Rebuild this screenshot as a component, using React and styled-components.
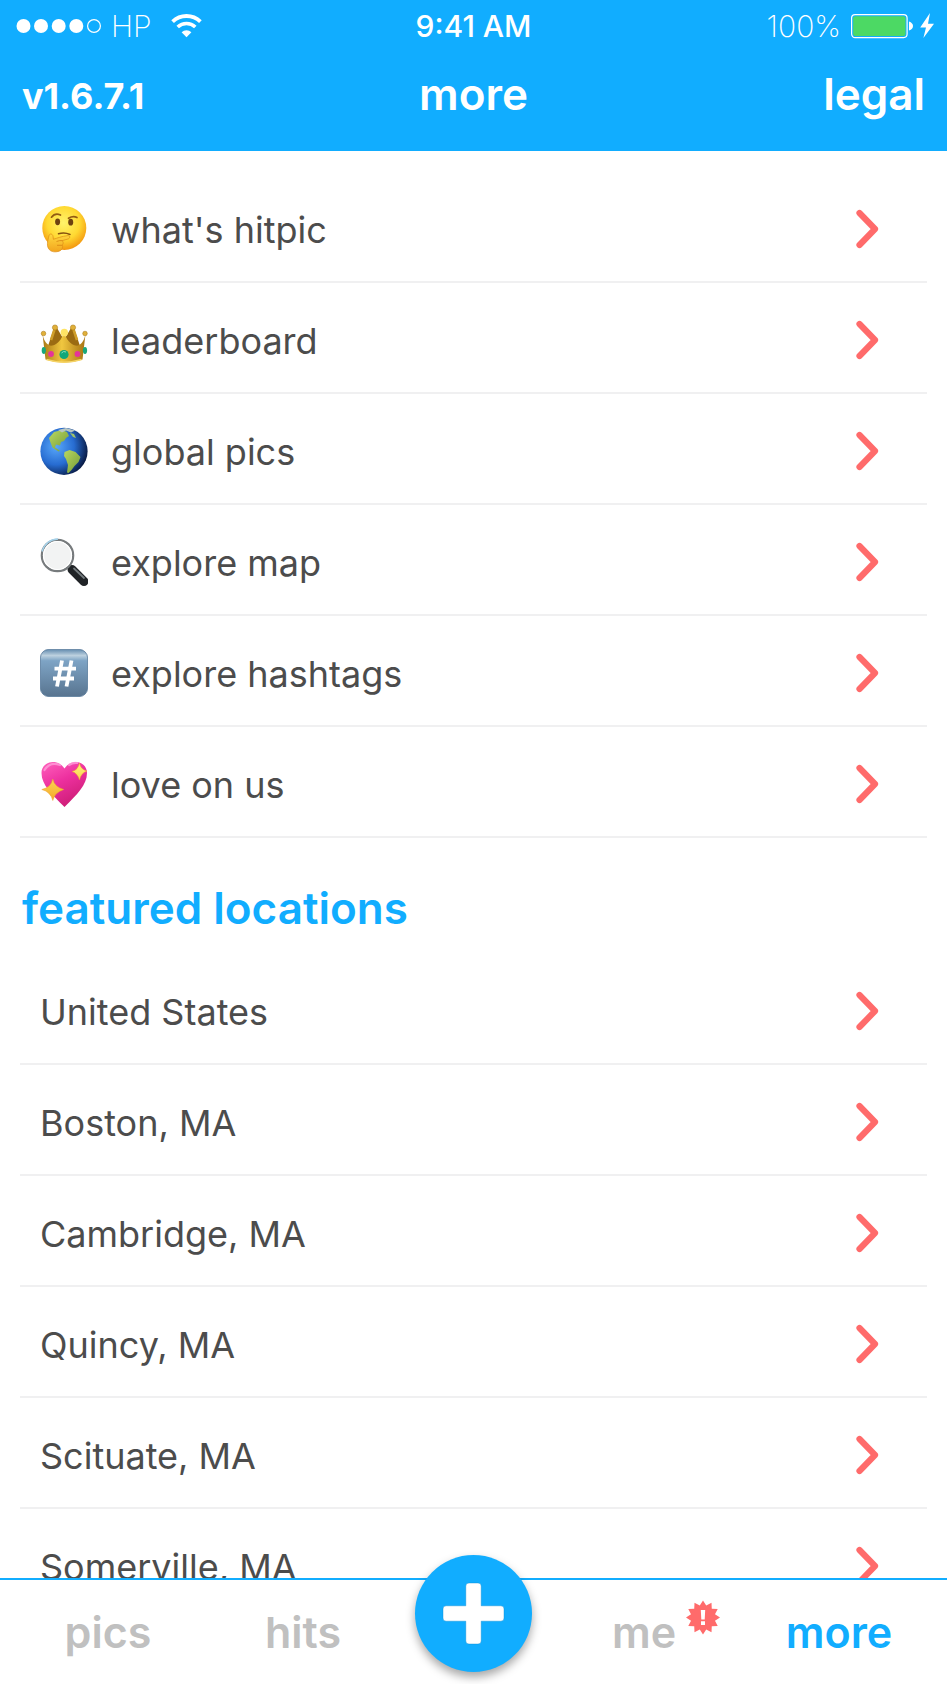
import React from "react";
import styled, { createGlobalStyle } from "styled-components";

const blue = "#11adff";
const coral = "#ff6b6b";

const GlobalStyle = createGlobalStyle`
  * { box-sizing: border-box; }
  body { margin: 0; background: #fff; }
  button, a { font: inherit; color: inherit; text-decoration: none; }
`;

const Screen = styled.div`
  display: flex;
  flex-direction: column;
  height: 100vh;
  overflow: hidden;
  background: #fff;
  color: #4c4c4c;
  font-family: Inter, "Liberation Sans", sans-serif;
`;

const Header = styled.header`
  flex: none;
  background: ${blue};
  color: #fff;
  padding-bottom: 20px;
`;

const StatusBar = styled.div`
  display: grid;
  grid-template-columns: 1fr auto 1fr;
  align-items: center;
  height: 52px;
  padding: 0 13px;
  font-size: 30px;
  line-height: 52px;
  font-weight: 200;
`;

const StatusGroup = styled.div`
  display: flex;
  align-items: center;
  justify-content: ${(p) => (p.$end ? "flex-end" : "flex-start")};
  gap: 9px;
  padding-left: 3px;
`;

const Carrier = styled.span`
  margin-right: 10px;
`;

const Clock = styled.time`
  font-weight: 500;
`;

const Navigation = styled.div`
  display: grid;
  grid-template-columns: 1fr auto 1fr;
  align-items: center;
  height: 79px;
  padding: 4px 22px 0;
  font-size: 44px;
  line-height: 52px;
  font-weight: 600;
`;

const Version = styled.span`
  font-size: 36px;
  font-weight: 700;
  padding-top: 4px;
`;

const Title = styled.h1`
  margin: 0;
  font-size: 44px;
  font-weight: 600;
`;

const HeaderLink = styled.a`
  justify-self: end;
`;

const Content = styled.main`
  flex: 1;
  min-height: 0;
  overflow-y: auto;
  scrollbar-width: none;
  padding: 21px 20px 0;
`;

const List = styled.ul`
  list-style: none;
  margin: 0;
  padding: 0;
`;

const RowLink = styled.a`
  display: flex;
  align-items: center;
  gap: 23px;
  height: 111px;
  padding: 5px 48px 0 20px;
  border-bottom: 2px solid #f0f0f1;
  font-size: 36px;
  line-height: 44px;
`;

const RowLabel = styled.span`
  flex: 1;
  padding-top: 1px;
`;

const SectionTitle = styled.h2`
  margin: 0;
  padding: 44px 0 20px 2px;
  color: ${blue};
  font-size: 44px;
  line-height: 52px;
  font-weight: 600;
`;

const TabBar = styled.nav`
  flex: none;
  position: relative;
  display: grid;
  grid-template-columns: 216fr 174fr 167fr 174fr 216fr;
  justify-items: center;
  height: 106px;
  border-top: 2px solid ${blue};
  background: #fff;
`;

const Tab = styled.a`
  position: relative;
  align-self: center;
  color: ${(p) => (p.$active ? blue : "#c0c0c0")};
  font-size: 43px;
  line-height: 52px;
  font-weight: 600;
`;

const Badge = styled.span`
  position: absolute;
  left: 100%;
  top: -6px;
  display: flex;
  margin-left: 10px;
`;

const AddButton = styled.button`
  display: grid;
  place-items: center;
  width: 117px;
  height: 117px;
  margin-top: -25px;
  padding: 0;
  border: 0;
  border-radius: 50%;
  background: ${blue};
  box-shadow: 0 5px 10px rgba(0, 0, 0, 0.35);
`;

const SignalDots = () => (
  <svg width="86" height="16" viewBox="0 0 86 16" aria-hidden="true">
    {[7.5, 25, 42.7, 60.3].map((x) => (
      <circle key={x} cx={x} cy="8" r="7" fill="#fff" />
    ))}
    <circle cx="78" cy="8" r="6.4" fill="none" stroke="#fff" strokeWidth="1.2" />
  </svg>
);

const Wifi = () => (
  <svg width="31" height="24" viewBox="0 0 31 24" aria-hidden="true">
    <path d="M1.6 7.6a20 20 0 0 1 27.8 0" fill="none" stroke="#fff" strokeWidth="3.8" />
    <path d="M6.7 13a12.8 12.8 0 0 1 17.6 0" fill="none" stroke="#fff" strokeWidth="3.6" />
    <path d="M10.6 18.2a7 7 0 0 1 9.8 0L15.5 23.2Z" fill="#fff" />
  </svg>
);

const Battery = () => (
  <svg width="84" height="28" viewBox="0 0 84 28" aria-hidden="true">
    <rect x="1.6" y="2.6" width="55.5" height="23" rx="3.5" fill="none" stroke="#fff" strokeWidth="1.2" />
    <rect x="3.2" y="4.2" width="52.3" height="19.8" rx="2" fill="#4cd964" />
    <path d="M59 9.5q4 1.5 4 4.5t-4 4.5Z" fill="#fff" />
    <path d="M80 1 70.2 15.6H76L73.4 26 84 11.8H78Z" fill="#fff" />
  </svg>
);

const Chevron = () => (
  <svg width="23" height="40" viewBox="0 0 23 40" aria-hidden="true">
    <path d="M3.5 4 19 20 3.5 36" fill="none" stroke={coral} strokeWidth="6.2" strokeLinecap="round" strokeLinejoin="round" />
  </svg>
);

const Plus = () => (
  <svg width="65" height="65" viewBox="0 0 65 65" aria-hidden="true">
    <path
      d="M28 2h9q3.2 0 3.2 3.2v19.600h19.600q3.200 0 3.200 3.200v9q0 3.200-3.200 3.200H40.200v19.600q0 3.200-3.200 3.200h-9q-3.200 0-3.200-3.200V40.200H5.200Q2 40.200 2 37v-9q0-3.200 3.200-3.200h19.600V5.200Q24.800 2 28 2Z"
      fill="#fff"
      stroke="#0788ce"
      strokeOpacity="0.5"
      strokeWidth="0.8"
    />
  </svg>
);

const AlertBurst = () => {
  const points = Array.from({ length: 24 }, (_, i) => {
    const r = i % 2 ? 12.4 : 17;
    const a = (i * Math.PI) / 12 - Math.PI / 2;
    return `${17 + r * Math.cos(a)},${17.5 + r * Math.sin(a)}`;
  }).join(" ");
  return (
    <svg width="34" height="35" viewBox="0 0 34 35" role="img" aria-label="new activity">
      <polygon points={points} fill={coral} />
      <path d="M14.800 10h4.400l-.5 9.500h-3.400ZM15 21.200h4v3.800h-4Z" fill="#fff" />
    </svg>
  );
};

const Emoji = ({ children }) => (
  <svg width="48" height="48" viewBox="0 0 48 48" aria-hidden="true">
    {children}
  </svg>
);

const Thinking = () => (
  <Emoji>
    <defs>
      <radialGradient id="face" cx=".48" cy=".38" r=".62">
        <stop offset="0" stopColor="#fff36b" />
        <stop offset=".6" stopColor="#ffd932" />
        <stop offset="1" stopColor="#f3960f" />
      </radialGradient>
      <linearGradient id="hand" x2="0" y2="1">
        <stop offset="0" stopColor="#ffd83f" />
        <stop offset="1" stopColor="#f2a51e" />
      </linearGradient>
    </defs>
    <circle cx="24.300" cy="23" r="22" fill="url(#face)" />
    <ellipse cx="17.600" cy="16.800" rx="2.500" ry="3.400" fill="#6d4010" />
    <ellipse cx="30.700" cy="17.200" rx="2.500" ry="3.400" fill="#6d4010" />
    <path d="M11.500 12.200q3.500-4.600 9-2.200M28.500 13.300q4.500-2.700 8.500-.8" fill="none" stroke="#945c12" strokeWidth="1.700" strokeLinecap="round" />
    <path d="M18.500 28.800q6-2 11.500.7" fill="none" stroke="#86500f" strokeWidth="1.500" strokeLinecap="round" />
    <path d="M9 30.500c1.200-2.700 3.800-1.300 4 .8l.4 3c4-1.300 8.500-3 14.400-3.700 2.500-.1 2.600 2.800.2 3.400l-6 1.700c1.600 1.300 1.500 3 .4 4.200.8 2.400-.5 5.400-3.300 6.300-3.500 1-7.500 1-9.800-1.600C6.300 41 7.500 37 9 30.500Z" fill="url(#hand)" stroke="#dd8b16" strokeWidth=".7" />
    <path d="M16.500 36.500q3.500-1.400 5.800-.8M17 40.300h5" fill="none" stroke="#d58312" strokeWidth=".8" />
  </Emoji>
);

const Crown = () => (
  <Emoji>
    <defs>
      <linearGradient id="gold">
        <stop offset="0" stopColor="#aa7814" />
        <stop offset=".45" stopColor="#f0c740" />
        <stop offset="1" stopColor="#a87312" />
      </linearGradient>
    </defs>
    <path d="M6 36 14 12h3l7 12 7-12h3l8 24Z" fill="#9b6b12" />
    <path d="M2.500 18c1.500 8 5.500 12.500 10 11.500 5-1 9-6 11.500-13 2.500 7 6.500 12 11.500 13 4.500 1 8.500-3.500 10-11.500l-3 25.500Q24 50 5.500 43.500Z" fill="url(#gold)" />
    <path d="M14.500 13.500 11 24M33.500 13.500 37 24" fill="none" stroke="#cf9e2a" strokeWidth="2.600" />
    <g fill="#e0b039" stroke="#a2700f" strokeWidth=".5">
      <circle cx="3.500" cy="17.500" r="2.300" />
      <circle cx="15" cy="11.500" r="2.600" />
      <circle cx="33" cy="11.500" r="2.600" />
      <circle cx="45" cy="17.500" r="2.300" />
    </g>
    <circle cx="24.300" cy="16.500" r="3.700" fill="#ffe465" />
    <path d="M6.500 43.500q17.500 5.500 35 0" fill="none" stroke="#f6d466" strokeWidth="1.500" />
    <circle cx="24" cy="38.500" r="4.600" fill="#11a779" />
    <path d="M21.500 37q2-2.500 4.500-1" fill="none" stroke="#8ae2bf" />
    <g fill="#e5339a">
      <circle cx="11" cy="38" r="2.900" />
      <circle cx="37.500" cy="38" r="2.900" />
    </g>
    <ellipse cx="3.800" cy="34.500" rx="2.100" ry="3.400" fill="#18a87b" />
    <ellipse cx="45" cy="34.500" rx="2.100" ry="3.400" fill="#18a87b" />
  </Emoji>
);

const Globe = () => (
  <Emoji>
    <defs>
      <radialGradient id="ocean" cx=".33" cy=".4" r=".7">
        <stop offset="0" stopColor="#59a8fb" />
        <stop offset=".55" stopColor="#276cd1" />
        <stop offset="1" stopColor="#07173f" />
      </radialGradient>
      <linearGradient id="land" x2="1" y2="1">
        <stop offset="0" stopColor="#b9d862" />
        <stop offset="1" stopColor="#739a35" />
      </linearGradient>
    </defs>
    <circle cx="24" cy="24.300" r="23.600" fill="url(#ocean)" />
    <path d="m9 11 5-6 8-2 5 2 2 4-3 2-2 3-3 1-1 3.500-4-1-1 3 4 2.500 1 1-1.500.5-6-4-2-5Z" fill="url(#land)" />
    <path d="m18 3 8-2 9 2.500-4 2-5-2-4 2Z" fill="#b7c6c3" />
    <path d="m30 6 4 1 2 4-3-1Z" fill="#9fc36a" />
    <path d="m24.500 25 5-2 6 2 5 5-2 5-4 4-3 4-3 3-1.500-.5L28 38l-2-6-2-3Z" fill="url(#land)" />
  </Emoji>
);

const Magnifier = () => (
  <Emoji>
    <path d="m28 27.500 5 5" stroke="#777" strokeWidth="4.500" />
    <path d="m32 31.500 12 12" stroke="#202326" strokeWidth="9" strokeLinecap="round" />
    <path d="m34 30.500 10 9.500" stroke="#747b7e" strokeWidth="1.800" strokeLinecap="round" />
    <circle cx="17.500" cy="17.500" r="15.700" fill="#f2f3f3" stroke="#777b7d" strokeWidth="2.200" />
    <circle cx="17.500" cy="17.500" r="14" fill="none" stroke="#fff" strokeWidth="1.200" />
    <path d="M2 13.500Q6 1.500 18 1" fill="none" stroke="#a5d2ea" strokeWidth="1.300" />
  </Emoji>
);

const Hash = () => (
  <Emoji>
    <defs>
      <linearGradient id="key" x2="0" y2="1">
        <stop offset="0" stopColor="#648caf" />
        <stop offset=".13" stopColor="#bdd1df" />
        <stop offset=".24" stopColor="#7ea4c5" />
        <stop offset="1" stopColor="#58748f" />
      </linearGradient>
    </defs>
    <rect x=".4" y=".4" width="47.200" height="47.200" rx="8.500" fill="url(#key)" stroke="#547799" strokeWidth=".8" />
    <path d="m22 11.500-5 26M31.500 11.500l-5 26M14.500 19.700H36M13 29.500H34" fill="none" stroke="#fff" strokeWidth="3.800" />
  </Emoji>
);

const Heart = () => (
  <Emoji>
    <defs>
      <linearGradient id="pink" x2=".5" y2="1">
        <stop offset="0" stopColor="#ff62bd" />
        <stop offset=".5" stopColor="#ed309f" />
        <stop offset="1" stopColor="#cf1e78" />
      </linearGradient>
      <linearGradient id="spark" x2="0" y2="1">
        <stop offset="0" stopColor="#fff276" />
        <stop offset="1" stopColor="#f5a928" />
      </linearGradient>
    </defs>
    <path d="M24.500 47C12 34.500 1.500 25 1.500 13 1.500 1.500 17-2.500 24.500 8.500 32-2.500 47 1.500 47 13c0 12-10 21.500-22.500 34Z" fill="url(#pink)" />
    <path d="M4.500 10Q10 1 20 5M29 5q4-2.500 8-2" fill="none" stroke="#ff9dda" strokeWidth="2.200" strokeLinecap="round" opacity=".8" />
    <path d="M39.500 3q1 6.500 7.500 8-6 2-7.500 9-2-7-7.500-8.500 6-1.500 7.500-8.500ZM12.800 19q1.700 8 11 10.500-8.600 2.500-11 11-2.200-8.700-11-11Q11 27.500 12.800 19Z" fill="url(#spark)" stroke="#eda02a" strokeWidth=".5" />
  </Emoji>
);

const menu = [
  { label: "what's hitpic", Icon: Thinking },
  { label: "leaderboard", Icon: Crown },
  { label: "global pics", Icon: Globe },
  { label: "explore map", Icon: Magnifier },
  { label: "explore hashtags", Icon: Hash },
  { label: "love on us", Icon: Heart },
];

const locations = [
  "United States",
  "Boston, MA",
  "Cambridge, MA",
  "Quincy, MA",
  "Scituate, MA",
  "Somerville, MA",
].map((label) => ({ label }));

const Row = ({ label, Icon }) => (
  <li>
    <RowLink href="#">
      {Icon && <Icon />}
      <RowLabel>{label}</RowLabel>
      <Chevron />
    </RowLink>
  </li>
);

export default function App() {
  return (
    <Screen>
      <GlobalStyle />
      <Header>
        <StatusBar>
          <StatusGroup>
            <SignalDots />
            <Carrier>HP</Carrier>
            <Wifi />
          </StatusGroup>
          <Clock>9:41 AM</Clock>
          <StatusGroup $end>
            <span>100%</span>
            <Battery />
          </StatusGroup>
        </StatusBar>
        <Navigation>
          <Version>v1.6.7.1</Version>
          <Title>more</Title>
          <HeaderLink href="#">legal</HeaderLink>
        </Navigation>
      </Header>
      <Content>
        <List>
          {menu.map((item) => (
            <Row key={item.label} {...item} />
          ))}
        </List>
        <SectionTitle>featured locations</SectionTitle>
        <List>
          {locations.map((item) => (
            <Row key={item.label} {...item} />
          ))}
        </List>
      </Content>
      <TabBar>
        <Tab href="#">pics</Tab>
        <Tab href="#">hits</Tab>
        <AddButton type="button" aria-label="add pic">
          <Plus />
        </AddButton>
        <Tab href="#">
          me
          <Badge>
            <AlertBurst />
          </Badge>
        </Tab>
        <Tab href="#" $active aria-current="page">
          more
        </Tab>
      </TabBar>
    </Screen>
  );
}
